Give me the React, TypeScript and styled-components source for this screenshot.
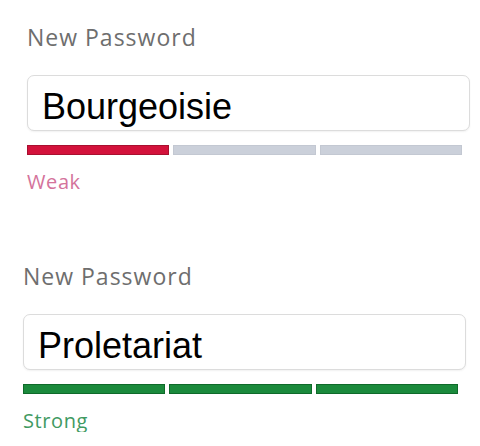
import styled, { createGlobalStyle } from "styled-components";

const GlobalStyle = createGlobalStyle`
  body {
    margin: 0;
    background: #ffffff;
  }
`;

type Strength = "weak" | "strong";

const tones: Record<Strength, { fill: string; edge: string; text: string; label: string; count: number }> = {
  weak: { fill: "#d3123b", edge: "#a8102f", text: "#d4739b", label: "Weak", count: 1 },
  strong: { fill: "#1b8a3c", edge: "#0f6a2a", text: "#3f9a62", label: "Strong", count: 3 },
};

const Page = styled.div`
  padding-top: 24px;
  display: flex;
  flex-direction: column;
  gap: 70px;
`;

const Field = styled.div<{ $inset: number }>`
  display: flex;
  flex-direction: column;
  padding-left: ${({ $inset }) => $inset}px;
  width: 443px;
`;

const Label = styled.label`
  font-family: "Open Sans", "Lato", sans-serif;
  font-size: 23px;
  line-height: 26px;
  letter-spacing: 1px;
  color: #6e6e6e;
  margin-bottom: 25px;
`;

const Input = styled.input`
  box-sizing: border-box;
  width: 100%;
  height: 56px;
  padding: 7px 12px 0 14px;
  border: 1px solid #dcdcdc;
  border-radius: 7px;
  box-shadow: 0 1px 2px rgba(0, 0, 0, 0.06);
  font-family: "Liberation Sans", Arial, sans-serif;
  font-size: 36px;
  color: #000000;
  background: #ffffff;
  outline: none;
`;

const Meter = styled.div`
  display: flex;
  gap: 4px;
  margin: 14px 8px 0 0;
`;

const Segment = styled.div<{ $fill: string; $edge: string }>`
  flex: 1;
  height: 10px;
  box-sizing: border-box;
  background: ${({ $fill }) => $fill};
  border: 1px solid ${({ $edge }) => $edge};
`;

const Status = styled.div<{ $color: string }>`
  font-family: "Open Sans", "Lato", sans-serif;
  font-size: 20px;
  line-height: 22px;
  letter-spacing: 0.6px;
  color: ${({ $color }) => $color};
  margin-top: 16px;
`;

function PasswordField({ value, strength, inset }: { value: string; strength: Strength; inset: number }) {
  const tone = tones[strength];
  return (
    <Field $inset={inset}>
      <Label>New Password</Label>
      <Input type="text" defaultValue={value} readOnly />
      <Meter>
        {[0, 1, 2].map((i) =>
          i < tone.count ? (
            <Segment key={i} $fill={tone.fill} $edge={tone.edge} />
          ) : (
            <Segment key={i} $fill="#cbd0da" $edge="#c3c8d2" />
          )
        )}
      </Meter>
      <Status $color={tone.text}>{tone.label}</Status>
    </Field>
  );
}

export default function App() {
  return (
    <>
      <GlobalStyle />
      <Page>
        <PasswordField value="Bourgeoisie" strength="weak" inset={27} />
        <PasswordField value="Proletariat" strength="strong" inset={23} />
      </Page>
    </>
  );
}
